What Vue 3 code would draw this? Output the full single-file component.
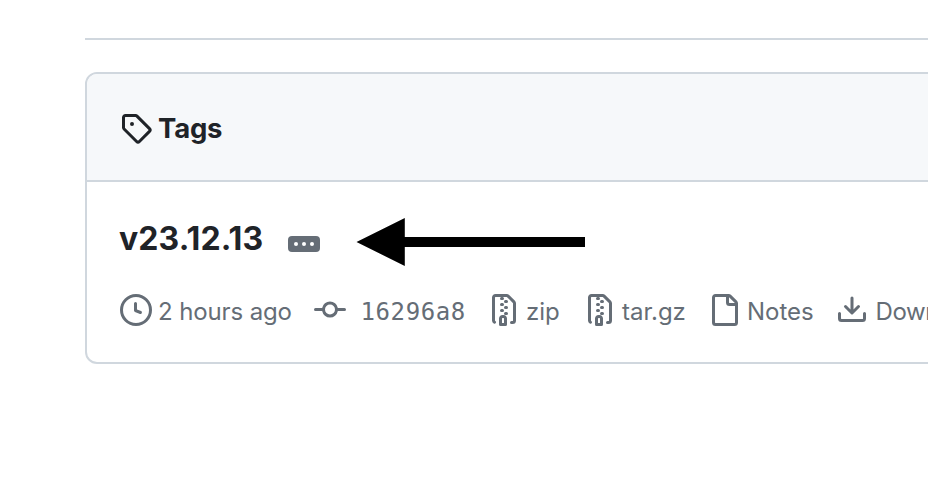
<script setup>
const icons = {
  tag: 'M1 7.775V2.75C1 1.784 1.784 1 2.75 1h5.025c.464 0 .91.184 1.238.513l6.25 6.25a1.75 1.75 0 0 1 0 2.474l-5.026 5.026a1.75 1.75 0 0 1-2.474 0l-6.25-6.25A1.752 1.752 0 0 1 1 7.775Zm1.5 0c0 .066.026.13.073.177l6.25 6.25a.25.25 0 0 0 .354 0l5.025-5.025a.25.25 0 0 0 0-.354l-6.25-6.25a.25.25 0 0 0-.177-.073H2.75a.25.25 0 0 0-.25.25ZM6 5a1 1 0 1 1 0 2 1 1 0 0 1 0-2Z',
  clock: 'M8 0a8 8 0 1 1 0 16A8 8 0 0 1 8 0ZM1.5 8a6.5 6.5 0 1 0 13 0 6.5 6.5 0 0 0-13 0Zm7-3.25v2.992l2.028.812a.75.75 0 0 1-.557 1.392l-2.5-1A.751.751 0 0 1 7 8.25v-3.5a.75.75 0 0 1 1.5 0Z',
  commit: 'M11.93 8.5a4.002 4.002 0 0 1-7.86 0H.75a.75.75 0 0 1 0-1.5h3.32a4.002 4.002 0 0 1 7.86 0h3.32a.75.75 0 0 1 0 1.5Zm-1.43-.75a2.5 2.5 0 1 0-5 0 2.5 2.5 0 0 0 5 0Z',
  zip: 'M3.5 1.75v11.5c0 .09.048.173.126.217a.75.75 0 0 1-.752 1.298A1.748 1.748 0 0 1 2 13.25V1.75C2 .784 2.784 0 3.75 0h5.586c.464 0 .909.185 1.237.513l2.914 2.914c.329.328.513.773.513 1.237v8.586A1.75 1.75 0 0 1 12.25 15h-.5a.75.75 0 0 1 0-1.5h.5a.25.25 0 0 0 .25-.25V4.664a.25.25 0 0 0-.073-.177L9.513 1.573a.25.25 0 0 0-.177-.073H7.25a.75.75 0 0 1 0 1.5h-.5a.75.75 0 0 1 0-1.5h-3a.25.25 0 0 0-.25.25Zm3.75 8.75h.5c.966 0 1.75.784 1.75 1.75v3a.75.75 0 0 1-.75.75h-2.5a.75.75 0 0 1-.75-.75v-3c0-.966.784-1.75 1.75-1.75ZM6 5.25a.75.75 0 0 1 .75-.75h.5a.75.75 0 0 1 0 1.5h-.5A.75.75 0 0 1 6 5.25Zm.75 2.25h.5a.75.75 0 0 1 0 1.5h-.5a.75.75 0 0 1 0-1.5ZM8 6.75A.75.75 0 0 1 8.75 6h.5a.75.75 0 0 1 0 1.5h-.5A.75.75 0 0 1 8 6.75ZM8.75 3h.5a.75.75 0 0 1 0 1.5h-.5a.75.75 0 0 1 0-1.5ZM8 9.75A.75.75 0 0 1 8.75 9h.5a.75.75 0 0 1 0 1.5h-.5A.75.75 0 0 1 8 9.75Zm-1 2.5v2.25h1v-2.25a.25.25 0 0 0-.25-.25h-.5a.25.25 0 0 0-.25.25Z',
  file: 'M2 1.75C2 .784 2.784 0 3.75 0h6.586c.464 0 .909.184 1.237.513l2.914 2.914c.329.328.513.773.513 1.237v9.586A1.75 1.75 0 0 1 13.25 16h-9.5A1.75 1.75 0 0 1 2 14.25Zm1.75-.25a.25.25 0 0 0-.25.25v12.5c0 .138.112.25.25.25h9.5a.25.25 0 0 0 .25-.25V6h-2.75A1.75 1.75 0 0 1 9 4.25V1.5Zm6.75.062V4.25c0 .138.112.25.25.25h2.688l-.011-.013-2.914-2.914-.013-.011Z',
  download: 'M2.75 14A1.75 1.75 0 0 1 1 12.25v-2.5a.75.75 0 0 1 1.5 0v2.5c0 .138.112.25.25.25h10.5a.25.25 0 0 0 .25-.25v-2.5a.75.75 0 0 1 1.5 0v2.5A1.75 1.75 0 0 1 13.25 14ZM7.25 7.689V2a.75.75 0 0 1 1.5 0v5.689l1.97-1.969a.749.749 0 1 1 1.06 1.06l-3.25 3.25a.749.749 0 0 1-1.06 0L4.22 6.78a.749.749 0 1 1 1.06-1.06l1.97 1.969Z',
}

const meta = [
  { key: 'time', icon: 'clock', label: '2 hours ago' },
  { key: 'sha', icon: 'commit', label: '16296a8' },
  { key: 'zip', icon: 'zip', label: 'zip' },
  { key: 'tar', icon: 'zip', label: 'tar.gz' },
  { key: 'notes', icon: 'file', label: 'Notes' },
  { key: 'downloads', icon: 'download', label: 'Downloads' },
]
</script>

<template>
  <main class="page">
    <div class="divider"></div>
    <section class="box">
      <header class="box-header">
        <svg class="icon" viewBox="0 0 16 16"><path :d="icons.tag" /></svg>
        <h2 class="heading">Tags</h2>
      </header>
      <div class="row">
        <div class="title-line">
          <h3 class="version">v23.12.13</h3>
          <button class="expander" type="button">
            <i class="dot"></i><i class="dot"></i><i class="dot"></i>
          </button>
          <svg class="arrow" viewBox="0 0 230 50">
            <path d="M.5 25 48.8 1v19H229v10H48.8v19Z" />
          </svg>
        </div>
        <ul class="meta">
          <li v-for="m in meta" :key="m.key" class="item" :class="m.key">
            <svg class="icon" viewBox="0 0 16 16"><path :d="icons[m.icon]" /></svg>
            <span class="label">{{ m.label }}</span>
          </li>
        </ul>
      </div>
    </section>
  </main>
</template>

<style>
body {
  margin: 0;
  background: #fff;
  overflow: hidden;
}
</style>

<style scoped>
.page {
  box-sizing: border-box;
  width: 928px;
  height: 492px;
  padding: 38px 0 0 85px;
  overflow: hidden;
  background: #fff;
  color: #1f2328;
  font-family: Inter, "Liberation Sans", sans-serif;
}
.divider {
  height: 2px;
  background: #d0d7de;
}
.box {
  box-sizing: border-box;
  width: 1100px;
  height: 292px;
  margin-top: 32px;
  border: 2px solid #d0d7de;
  border-radius: 12px;
  overflow: hidden;
}
.icon {
  flex: none;
  display: block;
  width: 32px;
  height: 32px;
  fill: currentColor;
}
.box-header {
  box-sizing: border-box;
  display: flex;
  align-items: center;
  height: 108px;
  padding: 2px 33px 0;
  background: #f6f8fa;
  border-bottom: 2px solid #d0d7de;
}
.heading {
  margin: -1px 0 0 6px;
  font-size: 27.5px;
  line-height: 36px;
  font-weight: 700;
  letter-spacing: -0.2px;
}
.row {
  padding: 35px 33px 0;
}
.title-line {
  display: flex;
  align-items: center;
  height: 50px;
}
.version {
  flex: none;
  width: 169px;
  margin: -7px 0 0 -1px;
  font-size: 32px;
  line-height: 40px;
  font-weight: 700;
  letter-spacing: 0.1px;
  white-space: nowrap;
}
.expander {
  flex: none;
  display: flex;
  align-items: center;
  justify-content: center;
  gap: 4px;
  width: 32px;
  height: 16px;
  margin-top: 4px;
  padding: 0;
  border: 0;
  border-radius: 4px;
  background: #656d76;
}
.dot {
  width: 4px;
  height: 4px;
  border-radius: 50%;
  background: #fff;
}
.arrow {
  flex: none;
  width: 230px;
  height: 50px;
  margin-left: 36px;
  fill: #000;
}
.meta {
  display: flex;
  margin: 27px 0 0;
  padding: 0;
  list-style: none;
  color: #656d76;
  font-size: 24px;
  line-height: 36px;
}
.item {
  flex: none;
  display: flex;
  white-space: nowrap;
}
.label {
  margin-left: 6px;
}
.time { width: 194px; }
.sha { width: 174px; }
.zip { width: 96px; }
.tar { width: 124px; }
.notes { width: 128px; }
.time .label {
  letter-spacing: -0.12px;
}
.notes .label {
  margin-left: 7px;
}
.downloads .label {
  margin-left: 7.5px;
  letter-spacing: -0.4px;
}
.sha .label {
  margin-left: 14.5px;
  font-family: "DejaVu Sans Mono", monospace;
  font-size: 24px;
  letter-spacing: 0.6px;
}
</style>
